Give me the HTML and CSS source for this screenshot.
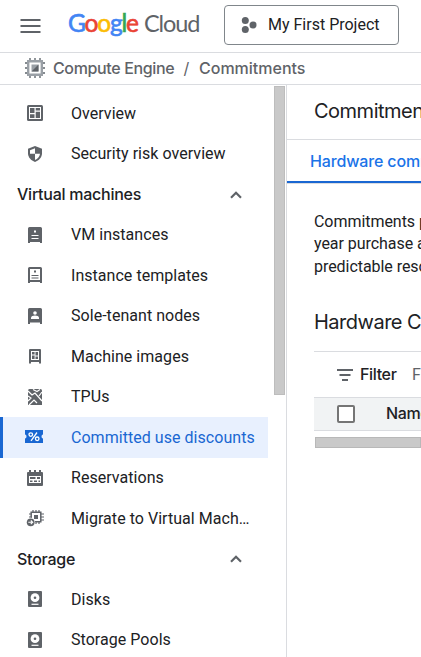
FILE: index.html
```html
<!DOCTYPE html>
<html lang="en">
<head>
<meta charset="utf-8">
<title>Commitments – Compute Engine</title>
<link rel="stylesheet" href="styles.css">
</head>
<body>
<header class="topbar">
  <svg class="menu" width="20" height="14" viewBox="0 0 20 14"><path d="M0 1h20M0 7h20M0 13h20" stroke="#5f6368" stroke-width="2"/></svg>
  <div class="logo"><span class="google"><span class="b">G</span><span class="r">o</span><span class="y">o</span><span class="b">g</span><span class="g">l</span><span class="r">e</span></span><span class="cloud">Cloud</span></div>
  <button class="project"><svg width="16" height="16" viewBox="0 0 16 16" fill="#5f6368"><circle cx="4.3" cy="3.6" r="3.5"/><circle cx="4.3" cy="12.4" r="3.5"/><circle cx="12" cy="8" r="3.5"/></svg><span>My First Project</span></button>
</header>
<nav class="crumbs">
  <svg width="22" height="22" viewBox="0 0 22 22"><path d="M6 1v20M11 1v20M16 1v20M1 6h20M1 11h20M1 16h20" stroke="#858b90" stroke-width="1.8"/><path fill="#fff" stroke="#9aa0a6" stroke-width="2.4" d="M4.2 4.2h13.6v13.6H4.2z"/><path fill="#9aa0a6" d="M7.5 7.5h7v7h-7z"/><path fill="#5f6368" d="M14.5 7.5v7h-7z"/></svg>
  <span class="engine">Compute Engine</span><span class="slash">/</span><span class="current">Commitments</span>
</nav>
<div class="body">
  <aside class="side">
    <ul class="nav">
      <li class="item"><svg viewBox="0 0 18 18"><rect x="1" y="1" width="16" height="16" rx="1.500" fill="#5f6368"/><path d="M3 3h12v12H3z" fill="#fff"/><path fill="#5f6368" d="M4 4h4.500v5H4zM4 10.200h4.500V14H4zM9.700 4H14v2.500H9.700zM9.700 7.700H14V14H9.700z"/></svg>Overview</li>
      <li class="item"><svg viewBox="0 0 18 18"><path fill="#5f6368" d="M9 1l7 2.700v4.600c0 4-3 7.400-7 8.700-4-1.300-7-4.700-7-8.700V3.700z"/><path fill="#fff" d="M9 3.300v5.400H4V5.200zM9 8.700h5c-.3 3-2.300 5.200-5 6.200z"/></svg>Security risk overview</li>
      <li class="group"><span>Virtual machines</span><svg viewBox="0 0 12 8"><path d="M1 6.700L6 1.700l5 5" fill="none" stroke="#5f6368" stroke-width="2.200"/></svg></li>
      <li class="item"><svg viewBox="0 0 18 18"><path fill="#5f6368" d="M3.500 1h11A1.500 1.500 0 0 1 16 2.500V17h-2v-1H4v1H2V2.500A1.500 1.500 0 0 1 3.500 1z"/><path fill="#fff" d="M8 4.500h2v2H8z"/><path d="M5.500 9.500h7M5.500 12.500h7" stroke="#fff" stroke-width="1"/></svg>VM instances</li>
      <li class="item"><svg viewBox="0 0 18 18"><path fill="#5f6368" d="M3.500 1h11A1.500 1.500 0 0 1 16 2.500V17h-2v-1H4v1H2V2.500A1.500 1.500 0 0 1 3.500 1z"/><path fill="#fff" d="M4 3h10v11H4z"/><path fill="#5f6368" d="M8 4.500h2v2H8z"/><path d="M5.500 9.500h7M5.500 12h7" stroke="#5f6368" stroke-width="1.200"/></svg>Instance templates</li>
      <li class="item"><svg viewBox="0 0 18 18"><path fill="#5f6368" d="M3.500 1h11A1.500 1.500 0 0 1 16 2.500V17h-2v-1.500H4V17H2V2.500A1.500 1.500 0 0 1 3.500 1z"/><circle cx="9" cy="6" r="1.800" fill="#fff"/><path fill="#fff" d="M5 12v-1.300c0-1.500 2-2.200 4-2.200s4 .7 4 2.200V12z"/></svg>Sole-tenant nodes</li>
      <li class="item"><svg viewBox="0 0 18 18"><path fill="#5f6368" d="M4 2h10a1 1 0 0 1 1 1v13.500h-2V15H5v1.500H3V3a1 1 0 0 1 1-1z"/><path fill="#fff" d="M5 4h8v9H5z"/><path fill="#5f6368" d="M6 5h2.600v2.600H6zM9.500 5H12v3.500H9.500zM6 8.500h2.600V12H6zM9.500 9.500H12V12H9.500z"/></svg>Machine images</li>
      <li class="item"><svg viewBox="0 0 18 18"><path fill="#5f6368" d="M3.500 1h11A1.500 1.500 0 0 1 16 2.500V17H2V2.500A1.500 1.500 0 0 1 3.500 1z"/><path d="M2 3l4 4 3-2 7 8M2 8l3 2-3 3M3 17l5-5 3 3M16 4l-3 4M7 1.500l4 2 3-2" fill="none" stroke="#fff" stroke-width="1.200"/></svg>TPUs</li>
      <li class="item active"><svg viewBox="0 0 18 18"><path fill="#1967d2" d="M0 2h18v4.500q-1.500 0-1.500 2T18 10.500V15H0v-4.500q1.500 0 1.500-2T0 6.500z"/><g fill="none" stroke="#fff" stroke-width="1.300"><circle cx="5.800" cy="6.600" r="1.800"/><circle cx="12.200" cy="10.800" r="1.800"/><path d="M12 4.500l-6 8.300"/></g></svg>Committed use discounts</li>
      <li class="item"><svg viewBox="0 0 18 18"><path fill="#5f6368" d="M3 1h2v2h3V1h2v2h3V1h2v2h1a1 1 0 0 1 1 1v12a1 1 0 0 1-1 1H2a1 1 0 0 1-1-1V4a1 1 0 0 1 1-1h1z"/><path fill="#fff" d="M3 7h12v7H3z"/><path fill="#5f6368" d="M4 8h5.500v2H4zM11 8h3v2h-3zM4 11.500h2.500V13H4zM8 11.500h3V13H8zM12.500 11.500H14V13h-1.500z"/></svg>Reservations</li>
      <li class="item"><svg viewBox="0 0 18 18"><path d="M7 1v14M10 1v14M13 1v14M3 5h15M3 8h15M3 11h15" stroke="#5f6368" stroke-width="1.200"/><path d="M5.200 3.200h9.600v9.600H5.200z" fill="#fff" stroke="#5f6368" stroke-width="1.500"/><path fill="#5f6368" d="M8 6h4v4H8z"/><circle cx="4.700" cy="13.300" r="4.500" fill="#fff"/><circle cx="4.700" cy="13.300" r="3.900" fill="#5f6368"/><path d="M2.300 13.300h4M4.800 11.500l1.900 1.800-1.900 1.800" fill="none" stroke="#fff" stroke-width="1.100"/></svg>Migrate to Virtual Mach…</li>
      <li class="group"><span>Storage</span><svg viewBox="0 0 12 8"><path d="M1 6.700L6 1.700l5 5" fill="none" stroke="#5f6368" stroke-width="2.200"/></svg></li>
      <li class="item"><svg viewBox="0 0 18 18"><rect x="2" y="1" width="14" height="16" rx="1" fill="#5f6368"/><circle cx="9" cy="7.700" r="4.400" fill="#fff"/><circle cx="9" cy="7.700" r="1.300" fill="#5f6368"/><path d="M5.500 14.300h7" stroke="#fff" stroke-width="1.200"/></svg>Disks</li>
      <li class="item"><svg viewBox="0 0 18 18"><rect x="2" y="1" width="14" height="16" rx="1" fill="#5f6368"/><circle cx="9" cy="7.700" r="4.400" fill="#fff"/><circle cx="9" cy="7.700" r="1.300" fill="#5f6368"/><path d="M5.500 14.300h7" stroke="#fff" stroke-width="1.200"/></svg>Storage Pools</li>
    </ul>
    <div class="vscroll"></div>
  </aside>
  <main class="main">
    <h1>Commitments</h1>
    <div class="tabs"><span>Hardware commitments</span></div>
    <p>Commitments provide<br>year purchase agreement<br>predictable resource</p>
    <h2>Hardware Commitments</h2>
    <div class="table">
      <div class="filter"><svg width="16" height="12" viewBox="0 0 16 12"><path d="M0 1h16M2.500 6h11M5 11h6" stroke="#5f6368" stroke-width="2"/></svg><b>Filter</b><span>Filter commitments</span></div>
      <div class="thead"><i class="box"></i><b>Name</b></div>
      <div class="hscroll"></div>
    </div>
  </main>
</div>
</body>
</html>
```
FILE: styles.css
```css
* { box-sizing: border-box; }
body { margin: 0; width: 421px; height: 657px; overflow: hidden; background: #fff; color: #202124; font: 16px Roboto, sans-serif; }
svg { display: block; flex: none; }
.topbar { display: flex; align-items: center; height: 53px; border-bottom: 1px solid #dadce0; padding-left: 21px; white-space: nowrap; }
.menu { flex: none; margin: -1px 27px 0 -1px; width: 21px; }
.logo { display: flex; flex: none; align-items: baseline; width: 156px; margin-top: -6px; line-height: 30px; font-family: Lato, sans-serif; }
.google { flex: none; font-size: 24.500px; letter-spacing: -1.200px; width: 76px; -webkit-text-stroke: .6px; }
.cloud { color: #5f6368; font-size: 23.500px; letter-spacing: -1.100px; }
.b { color: #4285f4; } .r { color: #ea4335; } .y { color: #fbbc04; } .g { color: #34a853; }
.project { flex: none; display: flex; align-items: center; gap: 11px; width: 175px; height: 40px; margin-top: -3px; padding: 0 0 0 16px; background: #fff; border: 1px solid #80868b; border-radius: 4px; font: 16px Roboto, sans-serif; color: #202124; }
.crumbs { display: flex; align-items: center; height: 32px; padding: 0 0 2px 24px; border-bottom: 1px solid #dadce0; color: #5f6368; font: 500 16px Inter, sans-serif; white-space: nowrap; }
.crumbs svg { margin-top: 1px; }
.engine { flex: none; width: 121px; margin-left: 7px; letter-spacing: -.36px; }
.slash { flex: none; width: 25px; text-align: center; font-weight: 400; }
.body { display: flex; height: 572px; }
.side { display: flex; flex: none; width: 287px; border-right: 1px solid #dadce0; }
.nav { flex: none; list-style: none; width: 268px; margin: 0; padding: 8.200px 0 0; }
.item, .group { display: flex; align-items: center; height: 40.490px; white-space: nowrap; }
.item { padding-left: 26px; letter-spacing: .04px; }
.item svg { width: 18px; height: 18px; margin-right: 27px; }
.active { background: #e8f0fe; color: #1967d2; border-left: 3px solid #1967d2; padding-left: 22px; }
.active svg { margin-right: 28px; }
.group { padding: 0 26px 0 17px; justify-content: space-between; font: 500 16px Inter, sans-serif; letter-spacing: -.25px; }
.group svg { width: 12px; height: 8px; margin-top: 1px; }
.vscroll { flex: none; width: 11px; height: 309px; margin: 1px 0 0 6px; background: #c9c9c9; border: 1px solid #bdbdbd; }
.main { flex: none; width: 134px; overflow: hidden; white-space: nowrap; }
h1, h2 { margin: 0; padding-left: 27px; font: 400 20px Inter, sans-serif; letter-spacing: -.5px; }
h1 { height: 55px; line-height: 53px; border-bottom: 1px solid #dadce0; }
.tabs { height: 44px; line-height: 42px; padding-left: 23px; border-bottom: 1px solid #dadce0; box-shadow: inset 0 -2px #1967d2; color: #1a73e8; font-family: Inter, sans-serif; font-weight: 500; letter-spacing: -.15px; }
p { margin: 26.700px 0 0; padding-left: 27px; line-height: 22.600px; letter-spacing: -.05px; }
h2 { margin-top: 29.500px; line-height: 28px; }
.table { margin: 15px 0 0 27px; border-top: 1px solid #dadce0; }
.filter { display: flex; align-items: center; height: 45px; padding-left: 23px; }
.filter svg { margin-top: 1px; }
.filter b { flex: none; width: 52px; margin: -1px 0 0 7px; letter-spacing: -.35px; }
b { font: 500 16px Inter, sans-serif; }
.filter span { color: #5f6368; }
.thead { display: flex; align-items: center; height: 34px; padding-left: 23px; background: #f1f3f4; border: solid #dadce0; border-width: 1px 0; }
.thead b { margin-top: -1px; letter-spacing: -.4px; }
.box { flex: none; width: 18px; height: 18px; margin: 1px 31px 0 0; border: 2px solid #757575; border-radius: 2px; background: #fff; }
.hscroll { height: 11px; margin: 6px 0 0 1px; background: #c9c9c9; border: 1px solid #b8b8b8; }
```
